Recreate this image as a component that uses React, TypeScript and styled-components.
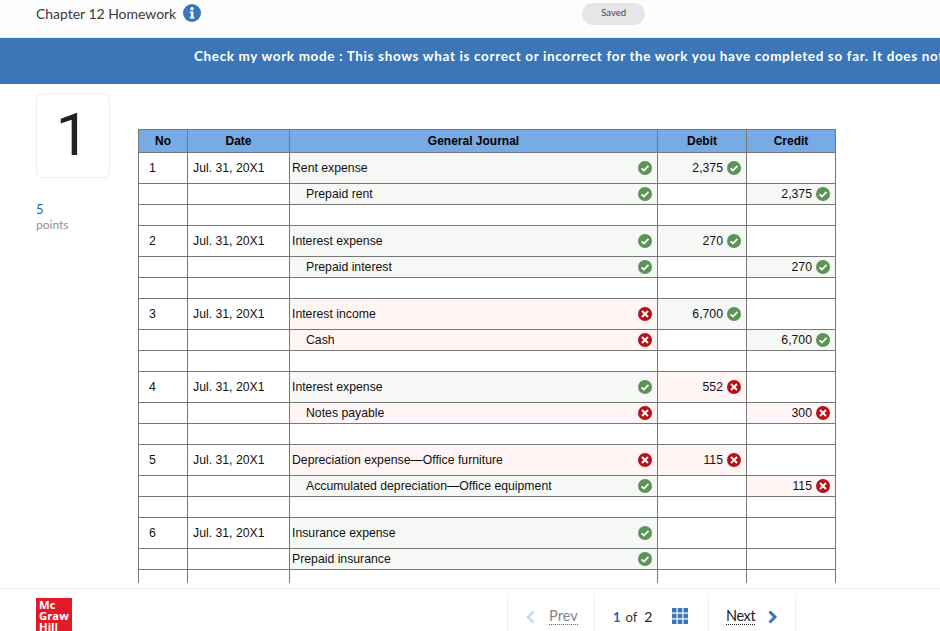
import React from "react";
import styled, { createGlobalStyle } from "styled-components";

const Global = createGlobalStyle`
  html, body { margin: 0; padding: 0; height: 100%; background: #fff; overflow: hidden; }
  #root { height: 100%; }
`;

const Page = styled.div`
  height: 631px;
  display: flex;
  flex-direction: column;
  overflow: hidden;
  font-family: Lato, "Liberation Sans", sans-serif;
  color: #333;
`;

const Header = styled.header`
  height: 37px;
  flex: none;
  display: flex;
  align-items: flex-start;
  padding-left: 36px;
  background: #fdfdfd;
  border-bottom: 1px solid #eee;
`;

const Title = styled.h1`
  margin: 5px 0 0;
  font-size: 14px;
  line-height: 17px;
  font-weight: 400;
  letter-spacing: -0.03px;
  color: #3a3a3a;
`;

const InfoButton = styled.span`
  margin: 4px 0 0 7px;
  width: 18px;
  height: 19px;
  display: flex;
`;

const SavedPill = styled.div`
  margin: 3px 0 0 381px;
  width: 63px;
  height: 22px;
  border-radius: 11px;
  background: #e6e5e7;
  font-size: 9.5px;
  line-height: 20px;
  text-align: center;
  color: #444;
`;

const Banner = styled.div`
  height: 46px;
  flex: none;
  box-sizing: border-box;
  padding: 10px 0 0 194px;
  background: #3a76b8;
  color: #fff;
  font-size: 13.5px;
  line-height: 17px;
  font-weight: 700;
  letter-spacing: 0.64px;
  white-space: nowrap;
  overflow: hidden;
`;

const Main = styled.main`
  flex: 1;
  min-height: 0;
  display: flex;
  overflow: hidden;
  padding-left: 36px;
`;

const Aside = styled.aside`
  width: 74px;
  flex: none;
  padding-top: 9px;
`;

const NumberBox = styled.div`
  box-sizing: border-box;
  height: 85px;
  padding-right: 1px;
  border: 1px solid #eee;
  border-radius: 6px;
  font-family: Roboto, sans-serif;
  font-size: 60px;
  line-height: 82px;
  text-align: center;
  color: #222;
`;

const Points = styled.div`
  margin-top: 23px;
  font-size: 13px;
  line-height: 16px;
  color: #2f62a8;
`;

const PointsLabel = styled.div`
  font-size: 12px;
  line-height: 16px;
  color: #8a8f96;
`;

const TableArea = styled.div`
  margin: 45px 0 0 28px;
`;

const Table = styled.table`
  width: 698px;
  table-layout: fixed;
  border-collapse: collapse;
  font-family: "Liberation Sans", Arial, sans-serif;
  font-size: 12.25px;
  color: #111;
`;

const Th = styled.th`
  height: 23px;
  padding: 0;
  box-sizing: border-box;
  border: 1px solid #777;
  background: #78aae5;
  font-size: 12px;
  font-weight: 700;
  color: #000;
  text-align: center;
`;

type Mark = "ok" | "bad" | undefined;

const Td = styled.td<{ $mark?: Mark; $align?: string; $pl?: number }>`
  padding: 0 0 0 ${(p) => p.$pl ?? 0}px;
  border: 1px solid #777;
  white-space: nowrap;
  text-align: ${(p) => p.$align ?? "left"};
  background: ${(p) => (p.$mark === "ok" ? "#f6f8f5" : p.$mark === "bad" ? "#fef5f4" : "#fff")};
`;

const Tr = styled.tr<{ $h: number }>`
  height: ${(p) => p.$h}px;
`;

const CellRow = styled.div`
  display: flex;
  align-items: center;
  justify-content: space-between;
  padding-right: 5px;
`;

const AmountRow = styled.div`
  display: flex;
  align-items: center;
  justify-content: flex-end;
  gap: 4px;
  padding-right: 5px;
`;

const AccountName = styled.span<{ $indent?: boolean }>`
  padding-left: ${(p) => (p.$indent ? 16 : 2)}px;
`;

const Footer = styled.footer`
  height: 43px;
  box-sizing: border-box;
  flex: none;
  margin-top: 5px;
  border-top: 1px solid #eee;
  display: flex;
  padding: 5px 0 0 36px;
  align-items: flex-start;
`;

const Logo = styled.div`
  width: 36px;
  height: 36px;
  flex: none;
  margin-top: 4px;
  box-sizing: border-box;
  padding: 1px 0 0 3px;
  background: #e21a27;
  color: #fff;
  font-family: "Open Sans", sans-serif;
  font-size: 11.3px;
  line-height: 11px;
  font-weight: 700;
`;

const Pager = styled.nav`
  margin-left: 435px;
  display: flex;
  height: 37px;
  border-left: 1px solid #f0f0f0;
`;

const PagerCell = styled.div<{ $w: number }>`
  width: ${(p) => p.$w}px;
  box-sizing: border-box;
  border-right: 1px solid #f0f0f0;
  display: flex;
  align-items: center;
  padding-top: 8px;
`;

const NavLink = styled.span<{ $off?: boolean }>`
  font-size: 14.5px;
  line-height: 16px;
  letter-spacing: ${(p) => (p.$off ? "0.1px" : "-0.4px")};
  color: ${(p) => (p.$off ? "#7f8790" : "#222")};
  border-bottom: 1px dotted ${(p) => (p.$off ? "#666" : "#222")};
`;

const Chevron = styled.svg`
  flex: none;
  width: 12px;
  height: 16px;
`;

const PageNow = styled.span`
  margin-left: 18px;
  font-size: 13px;
  font-weight: 700;
  color: #2f62a8;
`;

const PageOf = styled.span`
  margin-left: 5px;
  font-size: 13px;
  color: #333;
`;

const PageTotal = styled.span`
  margin-left: 7px;
  font-size: 14px;
  color: #222;
`;

const Check = () => (
  <svg width="14" height="14" viewBox="0 0 15 15" style={{ flex: "none" }}>
    <circle cx="7.5" cy="7.5" r="7.5" fill="#5d9258" />
    <path d="M3.8 7.8 6.4 10.2 11.2 5.2" fill="none" stroke="#fff" strokeWidth="1.9" />
  </svg>
);

const Cross = () => (
  <svg width="14" height="14" viewBox="0 0 15 15" style={{ flex: "none" }}>
    <circle cx="7.5" cy="7.5" r="7.5" fill="#b5121b" />
    <path d="M4.3 4.3 10.7 10.7M10.7 4.3 4.3 10.7" fill="none" stroke="#fff" strokeWidth="2" />
  </svg>
);

const MarkIcon = ({ m }: { m: Mark }) => (m === "ok" ? <Check /> : <Cross />);

type Line = {
  no?: string;
  date?: string;
  acc: string;
  am: Mark;
  indent?: boolean;
  debit?: string;
  credit?: string;
  dm?: Mark;
  cm?: Mark;
};

const lines: Line[] = [
  { no: "1", date: "Jul. 31, 20X1", acc: "Rent expense", am: "ok", debit: "2,375", dm: "ok" },
  { acc: "Prepaid rent", am: "ok", indent: true, credit: "2,375", cm: "ok" },
  { no: "2", date: "Jul. 31, 20X1", acc: "Interest expense", am: "ok", debit: "270", dm: "ok" },
  { acc: "Prepaid interest", am: "ok", indent: true, credit: "270", cm: "ok" },
  { no: "3", date: "Jul. 31, 20X1", acc: "Interest income", am: "bad", debit: "6,700", dm: "ok" },
  { acc: "Cash", am: "bad", indent: true, credit: "6,700", cm: "ok" },
  { no: "4", date: "Jul. 31, 20X1", acc: "Interest expense", am: "ok", debit: "552", dm: "bad" },
  { acc: "Notes payable", am: "bad", indent: true, credit: "300", cm: "bad" },
  { no: "5", date: "Jul. 31, 20X1", acc: "Depreciation expense—Office furniture", am: "bad", debit: "115", dm: "bad" },
  { acc: "Accumulated depreciation—Office equipment", am: "ok", indent: true, credit: "115", cm: "bad" },
  { no: "6", date: "Jul. 31, 20X1", acc: "Insurance expense", am: "ok" },
  { acc: "Prepaid insurance", am: "ok" },
];

const JournalRow = ({ l }: { l: Line }) => (
  <Tr $h={l.no ? 31 : 21}>
    <Td $pl={10}>{l.no}</Td>
    <Td $pl={5}>{l.date}</Td>
    <Td $mark={l.am}>
      <CellRow>
        <AccountName $indent={l.indent}>{l.acc}</AccountName>
        <MarkIcon m={l.am} />
      </CellRow>
    </Td>
    <Td $mark={l.dm} $align="right">
      {l.debit && (
        <AmountRow>
          {l.debit}
          <MarkIcon m={l.dm} />
        </AmountRow>
      )}
    </Td>
    <Td $mark={l.cm} $align="right">
      {l.credit && (
        <AmountRow>
          {l.credit}
          <MarkIcon m={l.cm} />
        </AmountRow>
      )}
    </Td>
  </Tr>
);

const SpacerRow = () => (
  <Tr $h={21}>
    <Td />
    <Td />
    <Td />
    <Td />
    <Td />
  </Tr>
);

export default function App() {
  return (
    <Page>
      <Global />
      <Header>
        <Title>Chapter 12 Homework</Title>
        <InfoButton>
          <svg width="18" height="18" viewBox="0 0 18 18">
            <circle cx="9" cy="9" r="9" fill="#3a76b8" />
            <circle cx="9" cy="4.8" r="1.7" fill="#fff" />
            <path d="M6.8 7.4H10.4V12.8H11.4V14.4H6.8V12.8H7.9V9H6.8Z" fill="#fff" />
          </svg>
        </InfoButton>
        <SavedPill>Saved</SavedPill>
      </Header>
      <Banner>
        Check my work mode : This shows what is correct or incorrect for the work you have completed so far. It does not indicate completion.
      </Banner>
      <Main>
        <Aside>
          <NumberBox>1</NumberBox>
          <Points>5</Points>
          <PointsLabel>points</PointsLabel>
        </Aside>
        <TableArea>
          <Table>
            <colgroup>
              <col style={{ width: 49 }} />
              <col style={{ width: 102 }} />
              <col style={{ width: 368 }} />
              <col style={{ width: 89 }} />
              <col style={{ width: 89 }} />
            </colgroup>
            <thead>
              <tr>
                <Th>No</Th>
                <Th>Date</Th>
                <Th>General Journal</Th>
                <Th>Debit</Th>
                <Th>Credit</Th>
              </tr>
            </thead>
            <tbody>
              {lines.map((l, i) => (
                <React.Fragment key={i}>
                  <JournalRow l={l} />
                  {i % 2 === 1 && <SpacerRow />}
                </React.Fragment>
              ))}
            </tbody>
          </Table>
        </TableArea>
      </Main>
      <Footer>
        <Logo>
          Mc
          <br />
          Graw
          <br />
          Hill
        </Logo>
        <Pager>
          <PagerCell $w={87}>
            <Chevron viewBox="0 0 12 16" style={{ marginLeft: 16, marginRight: 13 }}>
              <path d="M9.5 2.5 4 8l5.5 5.5" fill="none" stroke="#cfdcee" strokeWidth="3" />
            </Chevron>
            <NavLink $off>Prev</NavLink>
          </PagerCell>
          <PagerCell $w={114}>
            <PageNow>1</PageNow>
            <PageOf>of</PageOf>
            <PageTotal>2</PageTotal>
            <svg width="16" height="16" viewBox="0 0 16 16" style={{ marginLeft: 20, marginBottom: 2 }}>
              <path
                d="M0 0h4.6v4.6H0zM5.7 0h4.6v4.6H5.7zM11.4 0H16v4.6h-4.6zM0 5.7h4.6v4.6H0zM5.7 5.7h4.6v4.6H5.7zM11.4 5.7H16v4.6h-4.6zM0 11.4h4.6V16H0zM5.7 11.4h4.6V16H5.7zM11.4 11.4H16V16h-4.6z"
                fill="#3a76b8"
              />
            </svg>
          </PagerCell>
          <PagerCell $w={87}>
            <NavLink style={{ marginLeft: 17 }}>Next</NavLink>
            <Chevron viewBox="0 0 12 16" style={{ marginLeft: 12 }}>
              <path d="M2.5 2.5 8 8l-5.5 5.5" fill="none" stroke="#3a76b8" strokeWidth="3" />
            </Chevron>
          </PagerCell>
        </Pager>
      </Footer>
    </Page>
  );
}
